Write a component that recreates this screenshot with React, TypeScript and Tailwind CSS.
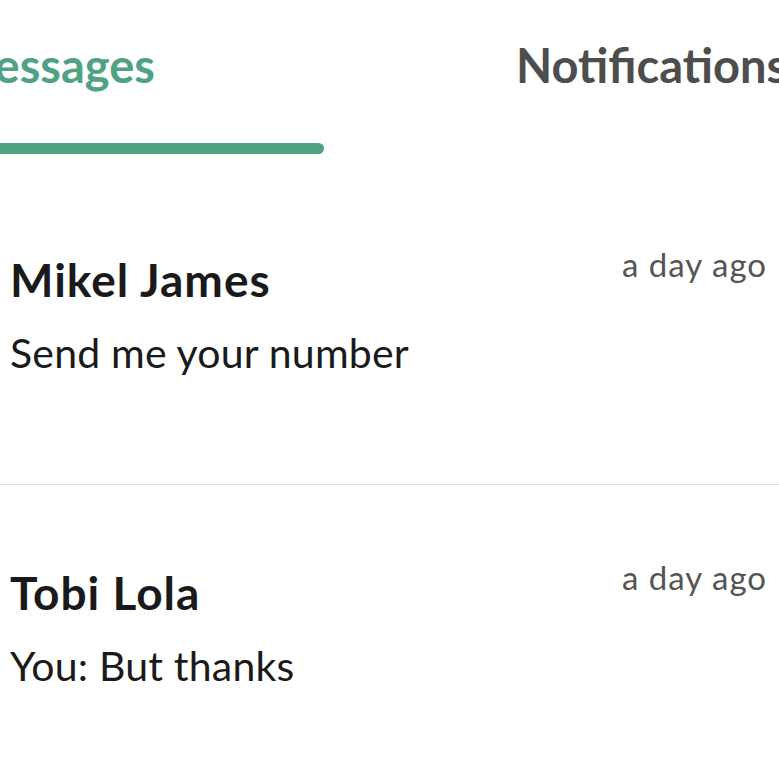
import React from "react";

type Thread = {
  id: number;
  name: string;
  preview: string;
  time: string;
};

const threads: Thread[] = [
  { id: 1, name: "Mikel James", preview: "Send me your number", time: "a day ago" },
  { id: 2, name: "Tobi Lola", preview: "You: But thanks", time: "a day ago" },
];

function Tabs() {
  return (
    <div className="flex h-[154px] shrink-0">
      <div className="flex w-[324px] shrink-0 flex-col">
        <div className="flex justify-end pr-[169px] pt-[37px]">
          <span className="whitespace-nowrap text-[47px] font-bold leading-[1.2] text-[#4fa383]">
            Messages
          </span>
        </div>
        <div className="mt-auto -ml-6 h-[11px] w-[348px] rounded-full bg-[#4fa383]" />
      </div>
      <div className="flex flex-1 pl-[192px] pt-[37px]">
        <span className="whitespace-nowrap text-[47px] font-bold leading-[1.2] text-[#4d4d4d]">
          Notifications
        </span>
      </div>
    </div>
  );
}

function ThreadRow({ thread }: { thread: Thread }) {
  return (
    <div className="h-[313px] shrink-0 border-b border-[#e2e2e2] pl-[10px] pr-[12px] pt-[73px]">
      <div className="flex items-start justify-between">
        <div className="flex flex-col pt-[7px]">
          <span className="whitespace-nowrap text-[46px] font-bold leading-[1.2] tracking-[1px] text-[#1a1a1a]">
            {thread.name}
          </span>
          <span className="mt-[21px] whitespace-nowrap text-[41px] leading-[1.2] tracking-[0.2px] text-[#1a1a1a]">
            {thread.preview}
          </span>
        </div>
        <span className="whitespace-nowrap text-[33px] leading-[1.2] tracking-[1px] text-[#555555]">
          {thread.time}
        </span>
      </div>
    </div>
  );
}

export default function App() {
  return (
    <div
      className="flex h-[779px] w-[779px] flex-col overflow-hidden bg-white"
      style={{ fontFamily: "Lato, 'Noto Sans', sans-serif" }}
    >
      <Tabs />
      <div className="flex flex-col pt-[18px]">
        {threads.map((t) => (
          <ThreadRow key={t.id} thread={t} />
        ))}
      </div>
    </div>
  );
}
